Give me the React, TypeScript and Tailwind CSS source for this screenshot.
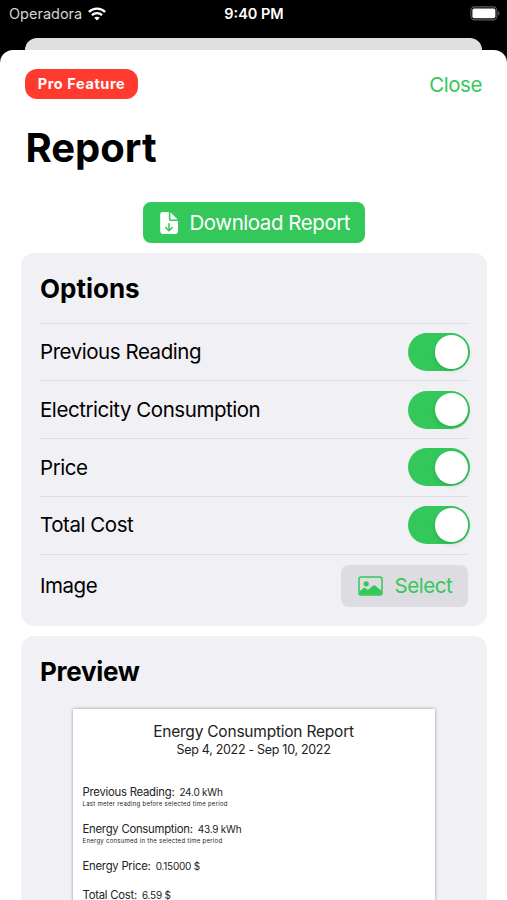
import React, { useState } from 'react'

const WifiIcon: React.FC = () => (
  <svg className="h-[14px] w-[18px]" viewBox="0 0 18 14" fill="none" stroke="white">
    <path d="M0.9 5C5.4 0.5 12.6 0.5 17.1 5" strokeWidth="2.4" />
    <path d="M3.9 8.2C6.8 5.4 11.2 5.4 14.1 8.2" strokeWidth="2.3" />
    <path d="M9 13.6L6.3 10.8C7.9 9.5 10.1 9.5 11.7 10.8Z" fill="white" stroke="none" />
  </svg>
)

const BatteryIcon: React.FC = () => (
  <svg className="h-[15px] w-[30px]" viewBox="0 0 30 15" fill="none">
    <rect x="0.9" y="0.9" width="26" height="13" rx="3.8" stroke="#5c5c5c" strokeWidth="1.1" />
    <rect x="2.4" y="2.6" width="23" height="9.6" rx="1.8" fill="white" />
    <path d="M28.2 5.2C29.9 5.9 29.9 8.9 28.2 9.6Z" fill="#6b6b6b" />
  </svg>
)

const FileDownIcon: React.FC = () => (
  <svg className="h-[22px] w-[18px]" viewBox="0 0 18 22" fill="white">
    <path d="M2.6 0H8.8V6.9A2.2 2.2 0 0 0 11 9.1H18V19.6A2.4 2.4 0 0 1 15.6 22H2.6A2.4 2.4 0 0 1 0.2 19.6V2.4A2.4 2.4 0 0 1 2.6 0Z" />
    <path d="M10.4 0.3L17.6 7.6H11.3A0.9 0.9 0 0 1 10.4 6.7Z" />
    <path d="M9 11.7V18.4M5.9 15.6L9 18.7L12.1 15.6" fill="none" stroke="#34c759" strokeWidth="1.5" strokeLinecap="round" strokeLinejoin="round" />
  </svg>
)

const PhotoIcon: React.FC = () => (
  <svg className="h-[20px] w-[25px]" viewBox="0 0 25 20" fill="none">
    <rect x="1" y="1" width="23" height="18" rx="2" stroke="#34c759" strokeWidth="1.5" />
    <circle cx="8.2" cy="7.8" r="2.6" fill="#34c759" />
    <path d="M1.5 15.2L5.6 12Q6.5 11.3 7.4 12L9.8 14L15 9.8Q16.2 8.9 17.4 9.8L23.6 15V17.6Q23.6 18.8 22.4 18.8H2.7Q1.5 18.8 1.5 17.6Z" fill="#34c759" />
  </svg>
)

interface ToggleProps {
  label: string
  checked: boolean
  onChange: () => void
}

const Toggle: React.FC<ToggleProps> = ({ label, checked, onChange }) => (
  <button
    role="switch"
    aria-label={label}
    aria-checked={checked}
    onClick={onChange}
    className={`-mr-[2px] flex h-[38px] w-[62.5px] items-center rounded-full p-[2px] ${
      checked ? 'justify-end bg-[#34c759]' : 'justify-start bg-[#e0e0e4]'
    }`}
  >
    <span className="h-[33.5px] w-[33.5px] rounded-full bg-white shadow-[0_2px_5px_rgba(0,0,0,0.12)]" />
  </button>
)

const App: React.FC = () => {
  const [options, setOptions] = useState([
    { label: 'Previous Reading', checked: true },
    { label: 'Electricity Consumption', checked: true },
    { label: 'Price', checked: true },
    { label: 'Total Cost', checked: true },
  ])

  const readings = [
    { label: 'Previous Reading:', value: '24.0 kWh', note: 'Last meter reading before selected time period' },
    { label: 'Energy Consumption:', value: '43.9 kWh', note: 'Energy consumed in the selected time period' },
    { label: 'Energy Price:', value: '0.15000 $' },
    { label: 'Total Cost:', value: '6.59 $' },
  ]

  const toggleOption = (index: number) => {
    setOptions(options.map((o, i) => (i === index ? { ...o, checked: !o.checked } : o)))
  }

  return (
    <div className="flex h-[900px] w-[507px] flex-col overflow-hidden bg-black font-['Inter',sans-serif] text-black">
      {/* Status bar */}
      <div className="grid h-[38px] shrink-0 grid-cols-3 items-start pt-[6px] text-[14.5px] leading-4 text-white">
        <div className="flex items-center gap-[6px] pl-[9px]">
          <span className="text-[#d4d4d4]">Operadora</span>
          <WifiIcon />
        </div>
        <div className="pl-px text-center font-semibold">9:40 PM</div>
        <div className="flex justify-end pr-[7px]">
          <BatteryIcon />
        </div>
      </div>

      {/* Sheet behind */}
      <div className="mx-[25px] h-[12px] shrink-0 rounded-t-[12px] bg-[#e0e0e0]" />

      <main className="flex-1 rounded-t-[13px] bg-white pt-[19px] pr-[20px] pl-[21px]">
        <div className="flex h-[30px] items-center justify-between pr-[5px] pl-[4px]">
          <span className="flex h-[30px] w-[113px] items-center justify-center rounded-[12px] bg-[#ff3b30] text-[14.5px] font-bold tracking-[0.6px] text-white">
            Pro Feature
          </span>
          <button className="pt-[2px] text-[20.5px] tracking-[-0.45px] text-[#34c759]">Close</button>
        </div>
        <h1 className="mt-[24px] ml-[4.5px] h-[50px] text-[40px] leading-[50px] font-bold">Report</h1>

        <button className="mx-auto mt-[29px] flex h-[41px] w-[222px] items-center rounded-[8px] bg-[#34c759] pl-[16.5px] text-[20.5px] tracking-[-0.45px] text-white">
          <FileDownIcon />
          <span className="ml-[12px] pt-px whitespace-nowrap">Download Report</span>
        </button>

        {/* Options */}
        <section className="mt-[10px] h-[373px] rounded-[13px] bg-[#f1f0f5] px-[19px]">
          <h2 className="h-[69.5px] pt-[20px] text-[26px] leading-8 font-bold">Options</h2>
          {options.map((option, index) => (
            <div
              key={option.label}
              className="flex h-[57.75px] items-center justify-between border-t border-[#dedde2] text-[20.5px] tracking-[-0.45px]"
            >
              <span className="pt-px">{option.label}</span>
              <Toggle label={option.label} checked={option.checked} onChange={() => toggleOption(index)} />
            </div>
          ))}
          <div className="flex h-[63px] items-center justify-between border-t border-[#dedde2] text-[20.5px] tracking-[-0.45px]">
            <span className="pt-px">Image</span>
            <button className="flex h-[42px] w-[127px] items-center rounded-[8px] bg-[#dddce2] pl-[16.5px] text-[#34c759]">
              <PhotoIcon />
              <span className="ml-[12px] pt-px">Select</span>
            </button>
          </div>
        </section>

        {/* Preview */}
        <section className="mt-[10px] h-[300px] rounded-[13px] bg-[#f1f0f5] px-[19px]">
          <h2 className="h-[73px] pt-[20px] text-[26px] leading-8 font-bold tracking-[-0.3px]">Preview</h2>
          <div className="ml-[33px] h-[240px] w-[362px] bg-white pt-[13px] pl-[9.5px] pr-[10.5px] text-[#222] shadow-[0_0_3px_rgba(0,0,0,0.4)]">
            <h3 className="text-center text-[15.5px] leading-5 tracking-[-0.22px]">Energy Consumption Report</h3>
            <p className="text-center text-[12.5px] leading-4 tracking-[-0.3px]">Sep 4, 2022 - Sep 10, 2022</p>
            <div className="mt-[27px]">
              {readings.map((reading) => (
                <div key={reading.label} className={reading.note ? 'h-[37px]' : 'h-[28.5px]'}>
                  <p className="flex items-baseline gap-[5px] text-[11.3px] leading-[15px] tracking-[-0.24px]">
                    <span>{reading.label}</span>
                    <span className="text-[10px]">{reading.value}</span>
                  </p>
                  {reading.note && <p className="text-[6px] leading-[7px] tracking-[0.27px]">{reading.note}</p>}
                </div>
              ))}
            </div>
          </div>
        </section>
      </main>
    </div>
  )
}

export default App
